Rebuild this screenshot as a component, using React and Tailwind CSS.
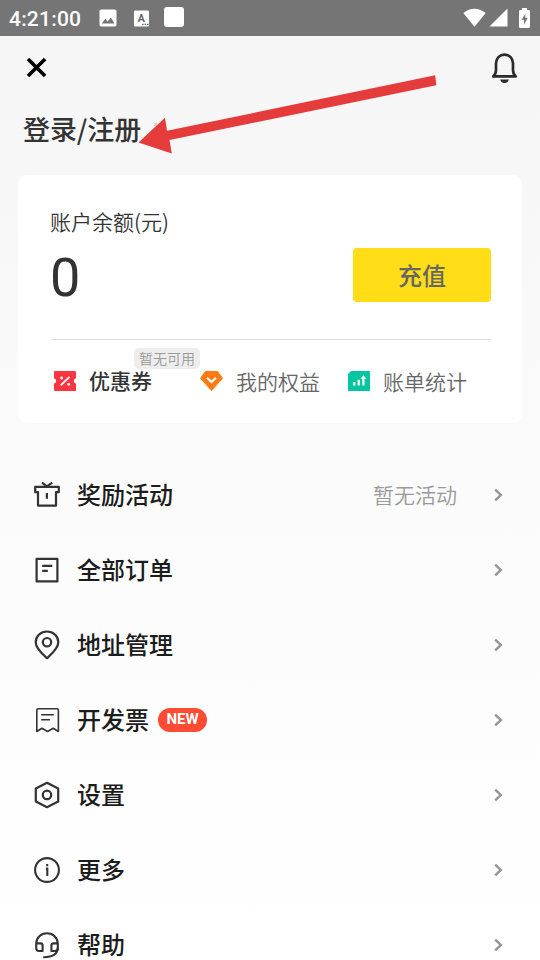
import React from "react";

const GiftIcon = () => (
  <svg width="30" height="30" viewBox="0 0 30 30" fill="none" stroke="#333" strokeWidth="2.2" strokeLinejoin="round">
    <path d="M6 12.2H3.2V6.8H26.8V12.2H24V25.6H6V12.2Z" />
    <path d="M10 2.6L14.9 6.4L20.3 2.6M14.9 13V18.8" />
  </svg>
);

const OrderIcon = () => (
  <svg width="30" height="30" viewBox="0 0 30 30" fill="none" stroke="#333" strokeWidth="2.2" strokeLinejoin="round">
    <rect x="4.6" y="3.8" width="20.8" height="22.6" />
    <path d="M10.2 10.9H20.3M10.2 15.8H15.8" />
  </svg>
);

const PinIcon = () => (
  <svg width="30" height="30" viewBox="0 0 30 30" fill="none" stroke="#333" strokeWidth="2.2" strokeLinejoin="round">
    <path d="M15 28.2C11.5 25 3.7 18.8 3.7 12.3C3.7 6 9 1.5 15 1.5S26.3 6 26.3 12.3C26.3 18.8 18.5 25 15 28.2Z" />
    <circle cx="15" cy="12.2" r="4.2" />
  </svg>
);

const InvoiceIcon = () => (
  <svg width="30" height="30" viewBox="0 0 30 30" fill="none" stroke="#333" strokeWidth="1.6" strokeLinejoin="round">
    <path d="M4.8 5.2Q4.8 3.8 6.2 3.8H25Q26.4 3.8 26.4 5.2V26.5L21.2 23.2L15.6 26.5L10 23.2L4.8 26.5Z" />
    <path d="M9.2 9.7H21.8M9.2 14.8H18" />
  </svg>
);

const SettingIcon = () => (
  <svg width="30" height="30" viewBox="0 0 30 30" fill="none" stroke="#333" strokeWidth="2.2" strokeLinejoin="round">
    <path d="M15 2.8L26.2 8.6V21.4L15 27.2L3.8 21.4V8.6Z" />
    <circle cx="15" cy="14.9" r="4.2" />
  </svg>
);

const MoreIcon = () => (
  <svg width="30" height="30" viewBox="0 0 30 30" fill="none" stroke="#333" strokeWidth="2.1">
    <circle cx="15" cy="15" r="11.9" />
    <path d="M13.9 13.6H15.3V21M15.2 9V11.3" />
  </svg>
);

const HelpIcon = () => (
  <svg width="30" height="30" viewBox="0 0 30 30" fill="none" stroke="#333" strokeWidth="2.1" strokeLinejoin="round">
    <path d="M4.2 18V13.8C4.2 7.6 9 3.2 15 3.2S25.8 7.6 25.8 13.8V18C25.8 24 20.5 27.4 11.2 27.2" />
    <path d="M4.2 13.4H8.6Q10.6 13.4 10.6 15.4V21H7Q4.2 21 4.2 18M25.8 13.4H21.4Q19.4 13.4 19.4 15.4V21H23Q25.8 21 25.8 18" />
  </svg>
);

const Chevron = () => (
  <svg width="10" height="14" viewBox="0 0 10 14" fill="none" stroke="#949494" strokeWidth="2.4">
    <path d="M2.2 1.6L7.8 7L2.2 12.4" />
  </svg>
);

const menuItems = [
  { label: "奖励活动", icon: GiftIcon, extra: "暂无活动" },
  { label: "全部订单", icon: OrderIcon },
  { label: "地址管理", icon: PinIcon },
  { label: "开发票", icon: InvoiceIcon, isNew: true },
  { label: "设置", icon: SettingIcon },
  { label: "更多", icon: MoreIcon },
  { label: "帮助", icon: HelpIcon },
];

const StatusBar = () => (
  <div className="flex h-9 items-center justify-between bg-[#757575] pl-[9px] pr-[10px] text-white">
    <div className="flex items-center">
      <span className="w-[90px] pt-px font-['Roboto',sans-serif] text-[21px] font-medium leading-9 tracking-[0.2px]">4:21:00</span>
      <svg width="18" height="18" viewBox="0 0 18 18">
        <rect x="0.5" y="0.5" width="17" height="17" rx="1.8" fill="#fff" />
        <path d="M2.8 14.5L6.3 9.8L8.7 12.6L11.8 8.5L15.5 14.5Z" fill="#757575" />
      </svg>
      <svg className="ml-[17px]" width="16" height="17" viewBox="0 0 16 17">
        <rect x="0" y="0.5" width="15" height="16" rx="1.2" fill="#fff" />
        <text x="7.4" y="12" textAnchor="middle" fontFamily="Roboto, sans-serif" fontSize="10.5" fontWeight="700" fill="#666">A</text>
        <path d="M8.2 14.3H9.6M10.6 14.3H12M13 14.3H14.4" stroke="#666" strokeWidth="1.3" />
      </svg>
      <div className="mb-[2px] ml-[14px] h-5 w-5 rounded-[3px] bg-white" />
    </div>
    <div className="flex items-center pb-px">
      <svg width="23" height="19" viewBox="0 0 23 19" fill="#fff">
        <path d="M0.3 5Q11.5 -3.6 22.7 5L11.5 18.7Z" />
      </svg>
      <svg className="ml-[3px]" width="19" height="19" viewBox="0 0 19 19" fill="#fff">
        <path d="M18.5 0.5V18.5H0.5Z" />
      </svg>
      <svg className="ml-[11px]" width="11" height="20" viewBox="0 0 11 20">
        <path d="M3 0H8V2H9.8Q11 2 11 3.2V18.8Q11 20 9.8 20H1.2Q0 20 0 18.8V3.2Q0 2 1.2 2H3Z" fill="#fff" />
        <path d="M6.7 5.2L2.5 11.8H5V16.8L8.7 9.8H6.3V5.2Z" fill="#757575" />
      </svg>
    </div>
  </div>
);

const App = () => {
  return (
    <div className="relative h-[960px] w-[540px] overflow-hidden bg-gradient-to-b from-[#f5f5f5] via-[#fbfbfb] to-white font-['Noto_Sans_CJK_SC',sans-serif]">
      <StatusBar />

      <div className="flex h-16 items-center justify-between pb-px pl-[26px] pr-[22px]">
        <svg width="21" height="21" viewBox="0 0 21 21" fill="none" stroke="#000" strokeWidth="3.6">
          <path d="M2 1.9L19.1 19M19.1 1.9L2 19" />
        </svg>
        <svg width="27" height="32" viewBox="0 0 27 32" fill="none">
          <path d="M2.2 24.4Q5 22 5 18.2V11.3C5 6.2 8.6 2.7 13.5 2.7S22 6.2 22 11.3V18.2Q22 22 24.8 24.4Z" stroke="#2b2b2b" strokeWidth="2.7" strokeLinejoin="round" />
          <path d="M9.2 27.6H17.8Q17 31.1 13.5 31.1T9.2 27.6Z" fill="#2b2b2b" />
        </svg>
      </div>

      <div className="flex h-[75px] pl-[23px] pt-[9px]">
        <h1 className="text-[27px] font-medium leading-[40px] tracking-[-0.1px] text-[#333]">登录/注册</h1>
        <span className="ml-[13px] mt-[14px] h-[3px] w-[3px] bg-[#d7d9c8]" />
      </div>

      <div className="mx-[18px] h-[248px] rounded-[9px] bg-white pl-[33px] pr-[31px] pt-[31px]">
        <p className="-ml-px h-8 text-[21px] leading-[31px] font-[350] text-[#333]">账户余额(元)</p>
        <div className="flex h-[102px] justify-between border-b border-[#dedede]">
          <span className="mt-[10px] -ml-[1px] font-['Roboto',sans-serif] text-[54px] leading-[60px] text-[#333]">0</span>
          <button className="mt-[10px] h-[54px] w-[138px] rounded-[4px] bg-[#ffde17] text-[24px] font-medium leading-[54px] text-[#666]">充值</button>
        </div>

        <div className="relative flex h-[82px] items-center text-[21px] font-[350] text-[#666]">
          <span className="absolute left-[83px] top-[8px] h-[21px] w-[66px] rounded-[5px] bg-[#ededed] text-center text-[14px] leading-[21px] text-[#999]">暂无可用</span>
          <div className="flex w-[149px] items-center pl-[3px]">
            <svg width="22" height="20" viewBox="0 0 22 20">
              <path d="M1 0H21Q22 0 22 1V7.2A2.9 2.9 0 0 0 22 12.8V19Q22 20 21 20H1Q0 20 0 19V12.8A2.9 2.9 0 0 0 0 7.2V1Q0 0 1 0Z" fill="#fb3640" />
              <path d="M6.7 14.3L15.5 5.8" stroke="#fff" strokeWidth="1.8" />
              <circle cx="7.6" cy="7" r="1.4" fill="#fff" />
              <circle cx="14.7" cy="13.3" r="1.4" fill="#fff" />
            </svg>
            <span className="relative -top-px ml-[13px] font-medium leading-8 text-[#333]">优惠券</span>
          </div>
          <div className="flex w-[148px] items-center">
            <svg width="23" height="20" viewBox="0 0 23 20">
              <path d="M5.5 0.5H17.5L22.5 7.3L11.5 19.5L0.5 7.3Z" fill="#ff7a12" stroke="#ff7a12" strokeLinejoin="round" />
              <path d="M7 6.7L11.5 11L16 6.7" fill="none" stroke="#fff" strokeWidth="2.2" />
            </svg>
            <span className="ml-[13px] leading-8">我的权益</span>
          </div>
          <div className="flex items-center">
            <svg width="22" height="20" viewBox="0 0 22 20">
              <path d="M3 0H21Q22 0 22 1V19Q22 20 21 20H1Q0 20 0 19V3Z" fill="#07c5a0" />
              <path d="M6.2 14.5V11M10.7 14.5V8.8M15.4 14.5V6.5" stroke="#fff" strokeWidth="2.2" />
              <path d="M12.5 7.7L15.5 4.3L18.3 7.7Z" fill="#fff" />
            </svg>
            <span className="ml-[13px] leading-8">账单统计</span>
          </div>
        </div>
      </div>

      <ul className="mt-[34px]">
        {menuItems.map(({ label, icon: Icon, extra, isNew }) => (
          <li key={label} className="flex h-[75px] items-center pl-8 pr-[37px]">
            <Icon />
            <span className="ml-[15px] pb-[2px] text-[24px] font-medium leading-8 text-[#1c1c1c]">{label}</span>
            {isNew && (
              <span className="ml-[9px] h-6 w-[49px] rounded-full bg-[#ff4b33] text-center font-['Roboto',sans-serif] text-[15px] font-bold leading-[23px] text-white">NEW</span>
            )}
            <div className="ml-auto flex items-center">
              {extra && <span className="mr-[36px] pb-[2px] text-[21px] font-[350] leading-8 text-[#999]">{extra}</span>}
              <Chevron />
            </div>
          </li>
        ))}
      </ul>

      {/* Arrow pointing at the login entry */}
      <svg className="absolute left-[138px] top-[70px]" width="300" height="90" viewBox="0 0 300 90">
        <path d="M0.5 72.5L27 47.8L29 60.8L297.2 5.3L298.3 15.3L31.5 70L33.8 83.5Z" fill="#e53b3b" />
      </svg>
    </div>
  );
};

export default App;
